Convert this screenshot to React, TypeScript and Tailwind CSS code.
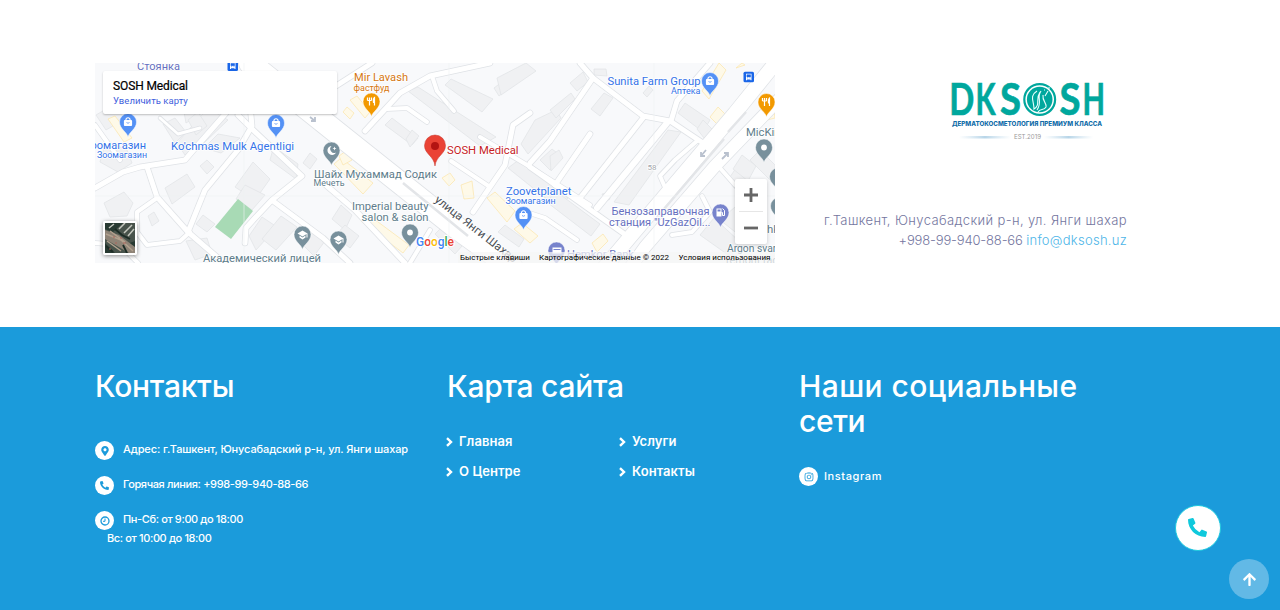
import React from "react";
import { FaPhone, FaInstagram, FaArrowUp, FaPhoneAlt, FaMapMarkerAlt } from "react-icons/fa";

const roads: [string, number][] = [
  ["95,188 123,172 140,167 185,160 197,146 226,113", 5],
  ["246,63 252,126 238,150 205,190 188,232 224,263", 5],
  ["238,115 251,128 302,176 272,200 255,218 246,228 245,243", 5],
  ["273,201 323,238 350,263", 5],
  ["147,167 157,197 188,232", 5],
  ["157,198 137,212 137,232 147,245 180,241 190,232", 4],
  ["95,243 120,245 138,263", 4],
  ["95,125 120,160", 4],
  ["160,118 178,134 200,128", 3],
  ["365,131 400,93 430,76 490,63", 5],
  ["322,95 372,63", 5],
  ["387,109 407,108 427,122", 4],
  ["432,76 437,91 454,111", 4],
  ["530,113 513,125 505,165 473,212", 5],
  ["480,137 527,165 590,205", 4],
  ["451,161 490,187", 4],
  ["580,63 593,78 643,116 670,121 703,143", 5],
  ["593,78 550,141 530,163", 5],
  ["643,118 580,198", 5],
  ["671,121 677,101 710,63", 5],
  ["667,123 597,208", 6],
  ["697,141 675,160 660,176 667,192", 4],
  ["530,167 630,238", 5],
  ["590,134 555,185", 5],
  ["520,210 545,218 577,240", 4],
  ["672,235 692,232 710,212 702,196", 4],
  ["320,180 355,210 405,263", 5],
  ["410,263 430,230", 4],
  ["720,168 735,185", 4],
];

const mainRoads: [string, number][] = [
  ["250,63 320,119 345,139 453,225 512,268", 22],
  ["790,45 735,113 630,237 604,268", 14],
  ["790,88 715,166 645,247 630,268", 12],
];

const buildings = [
  "106,141 100,162 118,172 132,163 127,150", "104,203 124,192 133,203 127,216 110,217",
  "165,188 187,174 195,187 172,204", "200,166 207,160 214,167 207,174",
  "148,216 154,212 159,221 152,226", "204,148 218,134 240,138 221,153",
  "208,108 228,120 205,142 185,155 177,143", "163,124 175,118 186,132 175,143",
  "180,90 202,90 212,107 186,123", "188,120 198,112 207,126 196,135",
  "235,187 253,162 270,179 255,200", "245,185 265,195 252,210 236,199",
  "273,149 280,151 298,164 296,179 270,160", "303,163 310,153 317,159 310,169",
  "249,236 262,217 277,227 256,250", "281,216 297,227 276,250 262,239",
  "298,240 309,226 325,241 314,256", "196,224 203,215 215,224 207,232",
  "186,241 207,238 212,254 195,260", "96,115 113,105 125,119 106,130",
  "385,125 392,118 418,138 412,145", "406,139 412,130 419,136 410,147",
  "408,91 418,87 496,137 480,146", "445,85 451,79 493,99 482,112",
  "494,88 511,75 517,82 499,96", "497,78 526,63 536,71 501,95",
  "521,144 535,120 556,110 561,118 528,154", "540,160 552,149 561,156 550,170",
  "508,168 520,159 568,198 558,208", "554,190 600,224 591,236 548,203",
  "570,83 583,72 588,82 577,91", "550,110 571,93 575,99 556,118",
  "591,109 604,93 613,98 600,116", "643,93 649,86 653,90 647,97",
  "594,69 606,69 607,76 594,75", "550,156 559,150 563,158 551,171",
  "614,202 668,130 681,132 629,205", "678,113 685,103 710,120 703,132",
  "697,129 703,120 713,130 704,138", "602,194 607,193 610,199 605,202",
  "728,180 736,168 749,180 739,194", "733,169 742,155 756,166 748,181",
  "750,160 760,150 775,165 775,185", "700,235 714,218 739,241 731,257",
  "720,220 735,207 739,235", "332,219 341,205 352,215 345,230", "335,236 345,225 359,236 350,248",
  "435,234 441,228 462,246 455,254", "498,232 505,225 524,239 519,247",
];

const yellow = [
  "108,119 115,116 132,138 124,142", "350,100 357,96 370,112 365,118",
  "343,112 347,107 354,113 350,119", "334,164 341,158 373,183 363,194",
  "339,156 346,151 352,160 343,165", "442,178 450,173 455,180 449,186",
  "461,185 472,181 474,198 464,199", "487,198 495,192 515,211 507,222",
  "361,221 370,216 409,245 403,253", "514,229 522,223 538,236 530,243",
  "592,243 603,234 608,241 597,252", "702,91 719,63 726,70 709,99",
  "710,117 718,107 726,115 718,125", "763,121 773,103 775,118", "736,68 742,63 745,65",
];

type LabelProps = { x: number; y: number; w: number; s?: number; c?: string; children: string };

function Label({ x, y, w, s = 11, c = "#607d8b", children }: LabelProps) {
  return (
    <text x={x} y={y} textLength={w} lengthAdjust="spacingAndGlyphs" fontSize={s} fill={c}
      stroke="#fff" strokeWidth={1.6} strokeLinejoin="round" paintOrder="stroke">
      {children}
    </text>
  );
}

function Pin({ x, y, c, kind }: { x: number; y: number; c: string; kind: string }) {
  return (
    <g transform={`translate(${x} ${y})`}>
      <path d="M0 15C-1 10-8.500 7-8.500 0A8.500 8.500 0 1 1 8.500 0C8.500 7 1 10 0 15Z" fill={c} stroke="#fff" strokeWidth=".5" />
      {kind === "bag" && (
        <g fill="none" stroke="#fff" strokeWidth="1.2">
          <path d="M-2 -1V-3Q0-5.500 2-3V-1" />
          <rect x="-3.500" y="-1.500" width="7" height="5" rx=".5" fill="#fff" />
          <path d="M-1.500 .5Q0 2 1.500 .5" stroke={c} strokeWidth=".8" />
        </g>
      )}
      {kind === "food" && (
        <path d="M-4-4V-1M-2-4V4M0-4V-1M-4-1H0M3 4V-4Q1.500-3 2 1H3" fill="none" stroke="#fff" strokeWidth="1.200" />
      )}
      {kind === "dot" && <circle r="2.900" fill="#fff" />}
      {kind === "moon" && <path d="M0-4.500A4.500 4.500 0 1 0 4.500 2A4 4 0 0 1 0-4.500ZM3-4L3.600-2.500L5-2L3.600-1.500L3 0L2.400-1.500L1-2L2.400-2.500Z" fill="#fff" />}
      {kind === "school" && (
        <g fill="#fff"><path d="M-5-1L0-4L5-1L0 2Z" /><path d="M-3 1L0 3L3 1V3L0 5L-3 3ZM4-1H5V3H4Z" /></g>
      )}
      {kind === "fuel" && (
        <g><path d="M-4-4H1V4H-4Z" fill="#fff" /><path d="M-3-3H0V-1H-3Z" fill={c} /><path d="M1 0H2V3H4V-2L2-4" stroke="#fff" fill="none" /></g>
      )}
      {kind === "card" && (
        <g><rect x="-4" y="-3" width="9" height="6" fill="#fff" /><path d="M-3-1H4" stroke={c} /></g>
      )}
    </g>
  );
}

function Bus({ x, y }: { x: number; y: number }) {
  return (
    <g transform={`translate(${x} ${y})`}>
      <rect width="10.500" height="10.500" rx="1.500" fill="#1a66e8" />
      <path d="M2.500 2H8V8.500H7V7.800H3.500V8.500H2.500Z" fill="#fff" />
      <path d="M3.400 3H7.100V5.200H3.400ZM3.500 6.200H4.500M6 6.200H7" fill="#1a66e8" stroke="#1a66e8" strokeWidth=".5" />
    </g>
  );
}

function MapDrawing() {
  const blue = "#3473e8";
  const violet = "#6670c0";
  return (
    <svg className="block h-[200px] w-[680px] font-[Roboto,sans-serif]" viewBox="95 63 680 200">
      <rect x="95" y="63" width="680" height="200" fill="#f8f9fb" />
      <g fill="#f0f1f3" stroke="#e2e4e7" strokeWidth=".8">
        {buildings.map((p) => <polygon key={p} points={p} />)}
      </g>
      <g fill="#fef9e8" stroke="#fbe7b2" strokeWidth=".8">
        {yellow.map((p) => <polygon key={p} points={p} />)}
      </g>
      <g fill="none" stroke="#dfe2e6" strokeLinecap="round" strokeLinejoin="round">
        {[...roads, ...mainRoads].map(([p, w]) => <polyline key={p} points={p} strokeWidth={w + 1.5} />)}
      </g>
      <g fill="none" stroke="#fff" strokeLinecap="round" strokeLinejoin="round">
        {[...roads, ...mainRoads].map(([p, w]) => <polyline key={p} points={p} strokeWidth={w} />)}
      </g>
      <polygon points="215,227 238,199 253,211 231,239" fill="#a8dab5" />
      <g fill="none" stroke="#e3e5e8" strokeWidth="1.200">
        <path d="M403 183L468 236M724 139L658 216M746 112L728 132" strokeWidth="2.500" />
        <path d="M95 196H775M244 63V263M449 63V263M654 63V263" stroke="#eff1f4" strokeWidth=".6" />
      </g>
      <g fill="none" stroke="#b9c1ce" strokeWidth="1.800">
        <path d="M706 150L701 156M701 152V156H705M722 159L728 153M724 153H728V157M310 117L315 121M315 117V121H311" />
      </g>

      <Label x={137} y={70} w={43} c={violet}>Стоянка</Label>
      <Bus x={227.5} y={60.500} />
      <Bus x={743.5} y={71.700} />
      <Pin x={128} y={122} c="#5491f5" kind="bag" />
      <Pin x={276} y={123} c="#5491f5" kind="bag" />
      <Pin x={710} y={81} c="#5491f5" kind="bag" />
      <Pin x={523.500} y={215} c="#5491f5" kind="bag" />
      <Pin x={371.500} y={101.500} c="#f29900" kind="food" />
      <Pin x={766.500} y={102} c="#f29900" kind="food" />
      <Pin x={331.500} y={150.500} c="#78909c" kind="moon" />
      <Pin x={302.500} y={234.500} c="#78909c" kind="school" />
      <Pin x={338.500} y={239.500} c="#78909c" kind="school" />
      <Pin x={410} y={232.500} c="#78909c" kind="dot" />
      <Pin x={764} y={147.500} c="#78909c" kind="dot" />
      <Pin x={778} y={176.500} c="#78909c" kind="dot" />
      <Pin x={779} y={206} c="#78909c" kind="dot" />
      <Pin x={720.500} y={212.500} c="#7783cc" kind="fuel" />
      <Pin x={556.500} y={250.500} c="#7783cc" kind="card" />

      <Label x={84} y={149} w={62} c={blue}>Зоомагазин</Label>
      <Label x={97} y={158} w={50} s={8.5} c={blue}>Зоомагазин</Label>
      <Label x={171} y={150} w={123} c={blue}>Ko'chmas Mulk Agentligi</Label>
      <Label x={354} y={81} w={54} c="#d57712">Mir Lavash</Label>
      <Label x={353.5} y={91} w={36} s={8.5} c="#d57712">фастфуд</Label>
      <Label x={607.5} y={84.5} w={93} c={blue}>Sunita Farm Group</Label>
      <Label x={671} y={93.5} w={29.500} s={8.5} c={blue}>Аптека</Label>
      <Label x={746} y={136} w={52}>MicKinney</Label>
      <Label x={314} y={177.500} w={123}>Шайх Мухаммад Содик</Label>
      <Label x={313.500} y={186} w={31} s={8.5}>Мечеть</Label>
      <Label x={352} y={209.500} w={76.500}>Imperial beauty</Label>
      <Label x={361.500} y={220.500} w={67}>salon & salon</Label>
      <Label x={506} y={194.500} w={65.500} c={blue}>Zoovetplanet</Label>
      <Label x={505.500} y={203.500} w={50} s={8.5} c={blue}>Зоомагазин</Label>
      <Label x={611.500} y={214.500} w={98} c={violet}>Бензозаправочная</Label>
      <Label x={609} y={225.500} w={101.500} c={violet}>станция "UzGazOil...</Label>
      <Label x={203} y={262} w={118}>Академический лицей</Label>
      <Label x={567} y={258} w={67} c={violet}>Hemkor Bank</Label>
      <Label x={727} y={252} w={60}>Argon svarka</Label>
      <Label x={726} y={264} w={55}>remont radi</Label>
      <Label x={767} y={233} w={12}>hk</Label>
      <Label x={647.500} y={170} w={9} s={8} c="#a3a6ab">58</Label>
      <g transform="translate(434 201) rotate(38)">
        <Label x={0} y={0} w={101} s={11.5} c="#4b5057">улица Янги Шахар</Label>
      </g>

      <path d="M435 166C434 156 424.500 154 424.500 145.500A10.500 10.500 0 1 1 445.500 145.500C445.500 154 436 156 435 166Z" fill="#ea4335" stroke="#c5352a" strokeWidth=".5" />
      <circle cx="435" cy="146" r="4" fill="#b31412" />
      <Label x={447} y={153.500} w={71.500} c="#c5221f">SOSH Medical</Label>

      <rect x="458" y="252" width="317" height="11" fill="#f5f5f5" opacity=".75" />
      <g fontSize="8" fill="#000">
        <text x="460" y="260" textLength="70" lengthAdjust="spacingAndGlyphs">Быстрые клавиши</text>
        <text x="539" y="260" textLength="130" lengthAdjust="spacingAndGlyphs">Картографические данные © 2022</text>
        <text x="678.500" y="260" textLength="92" lengthAdjust="spacingAndGlyphs">Условия использования</text>
      </g>
      <text x="416" y="246" textLength="38" lengthAdjust="spacingAndGlyphs" fontSize="12" fontWeight="500" stroke="#fff" strokeWidth="2" paintOrder="stroke">
        <tspan fill="#4285f4">G</tspan><tspan fill="#ea4335">o</tspan><tspan fill="#fbbc05">o</tspan><tspan fill="#4285f4">g</tspan><tspan fill="#34a853">l</tspan><tspan fill="#ea4335">e</tspan>
      </text>
    </svg>
  );
}

function MapCard() {
  return (
    <div className="relative h-[200px] w-[680px] overflow-hidden font-[Roboto,sans-serif]">
      <MapDrawing />
      <div className="absolute left-2 top-2 h-[43px] w-[234px] rounded-xs bg-white pl-[10px] pt-[8px] shadow-[0_1px_2px_rgba(0,0,0,.24)]">
        <div className="text-[12px] leading-[15px] tracking-[-0.12px] text-black [-webkit-text-stroke:0.2px_#000]">SOSH Medical</div>
        <div className="text-[9.5px] leading-[14px] tracking-[0.03px] text-[#3f5fdd]">Увеличить карту</div>
      </div>
      <div className="absolute bottom-[8px] left-[8px] h-[34px] w-[34px] rounded-xs border-2 border-white shadow-[0_1px_4px_rgba(0,0,0,.45)]">
        <svg viewBox="0 0 30 30" className="size-full">
          <path fill="#48534b" d="M0 0H30V30H0Z" />
          <path fill="#283a32" d="M0 0H18L8 9L0 6ZM0 20L10 30H0ZM22 21L30 18V30H27Z" />
          <path fill="#8e8376" d="M0 7L14 12L30 24V30H24L0 16Z" />
          <path d="M1 11L16 17L28 28M5 8L20 19M2 18L16 28" fill="none" stroke="#b2a18e" strokeWidth="1.500" />
          <path d="M14 6L20 0M19 10L27 2M23 13L29 6M4 5L9 1" fill="none" stroke="#c5c8bf" strokeWidth="1.500" />
          <path d="M10 6L17 12L25 16M1 23L8 29M18 22L22 30" fill="none" stroke="#1c2c25" strokeWidth="1.800" />
          <path d="M8 14H10M15 15H17M18 20H21M10 20H12M4 26H6" stroke="#aa655b" />
        </svg>
      </div>
      <div className="absolute right-2 top-[116px] flex h-[65px] w-8 flex-col items-center rounded-xs bg-white shadow-[0_1px_4px_rgba(0,0,0,.2)]">
        <div className="flex h-8 w-full items-center justify-center">
          <svg className="size-[14px]" viewBox="0 0 14 14"><path d="M7 0V14M0 7H14" stroke="#666" strokeWidth="2.800" /></svg>
        </div>
        <div className="h-px w-6 bg-[#e6e6e6]" />
        <div className="flex h-8 w-full items-center justify-center">
          <svg className="size-[14px]" viewBox="0 0 14 14"><path d="M0 7H14" stroke="#666" strokeWidth="2.800" /></svg>
        </div>
      </div>
    </div>
  );
}

function Logo() {
  return (
    <svg className="block h-[64px] w-[156px]" viewBox="949 79 156 64">
      <defs>
        <linearGradient id="rule"><stop stopColor="#c7deed" stopOpacity="0" /><stop offset=".5" stopColor="#b7d5e8" /><stop offset="1" stopColor="#c7deed" stopOpacity="0" /></linearGradient>
      </defs>
      <g fill="#00a79d" stroke="#00a79d" strokeWidth=".7" fontFamily="Lato, sans-serif" fontWeight="700" fontSize="44">
        <text x="949.300" y="115.300" textLength="25" lengthAdjust="spacingAndGlyphs">D</text>
        <text x="975.500" y="115.300" textLength="20" lengthAdjust="spacingAndGlyphs">K</text>
        <text x="1000" y="115.300" textLength="21" lengthAdjust="spacingAndGlyphs">S</text>
        <text x="1059.500" y="115.300" textLength="21" lengthAdjust="spacingAndGlyphs">S</text>
        <text x="1082.500" y="115.300" textLength="22.500" lengthAdjust="spacingAndGlyphs">H</text>
      </g>
      <circle cx="1039.700" cy="99.500" r="15.400" fill="#fff" stroke="#00a79d" strokeWidth="2.200" />
      <circle cx="1039.700" cy="99.500" r="12.800" fill="#00a79d" />
      <path d="M1037 91C1029 96 1034 101 1034 109C1041 105 1035 99 1040 92M1041 91C1036 98 1043 101 1037 110M1043 95C1042 101 1047 103 1046 107C1044 111 1040 108 1038 112M1048 91L1045 96M1044 90H1045M1048 88H1050M1051 93H1052" fill="none" stroke="#e8ffff" strokeWidth="1.100" />
      <text x="952" y="125.700" textLength="150" lengthAdjust="spacingAndGlyphs" fontFamily="Inter, sans-serif" fontWeight="800" fontSize="6.300" fill="#126da9">ДЕРМАТОКОСМЕТОЛОГИЯ ПРЕМИУМ КЛАССА</text>
      <rect x="959" y="136" width="52" height="2.500" fill="url(#rule)" />
      <rect x="1044" y="136" width="49" height="2.500" fill="url(#rule)" />
      <text x="1014" y="139" textLength="27" lengthAdjust="spacingAndGlyphs" fontFamily="Inter, sans-serif" fontSize="6.500" fill="#999">EST.2019</text>
    </svg>
  );
}

function Disc({ children }: { children: React.ReactNode }) {
  return <span className="mt-px flex size-[19px] shrink-0 items-center justify-center rounded-full bg-white text-[#1b9bdb]">{children}</span>;
}

function NavLink({ children }: { children: string }) {
  return (
    <a className="flex h-[30px] w-[173px] items-center text-[13px] font-semibold tracking-[0.06px]">
      <svg className="-ml-[2px] mr-[5px] h-[10px] w-[9px]" viewBox="0 0 9 10"><path d="M2 1.200L6 5L2 8.800" fill="none" stroke="currentColor" strokeWidth="2.400" /></svg>
      {children}
    </a>
  );
}

export default function App() {
  return (
    <div className="flex h-[610px] w-[1280px] flex-col overflow-hidden bg-white font-[Inter,sans-serif]">
      <section className="flex h-[327px] pl-[95px] pt-[63px]">
        <MapCard />
        <div className="flex w-[352px] flex-col items-end">
          <div className="mr-[22px] mt-4"><Logo /></div>
          <div className="mt-[67px] whitespace-nowrap text-right text-[13px] font-light leading-5 text-[#7476a0]">
            <div className="tracking-[0.38px]">г.Ташкент, Юнусабадский р-н, ул. Янги шахар</div>
            <div className="tracking-[-0.16px]">+998-99-940-88-66 <a className="tracking-[0.27px] text-[#4db5e8]">info@dksosh.uz</a></div>
          </div>
        </div>
      </section>

      <footer className="relative flex h-[283px] bg-[#1b9bdb] pl-[95px] pt-[42px] text-white">
        <div className="w-[352px]">
          <h2 className="text-[30px] font-medium leading-[35px] tracking-[-0.25px]">Контакты</h2>
          <div className="mt-9 flex flex-col gap-[15px] text-[11px] font-medium leading-[19px]">
            <div className="flex gap-[9px]"><Disc><FaMapMarkerAlt className="size-[10px]" /></Disc><span className="tracking-[-0.11px]">Адрес: г.Ташкент, Юнусабадский р-н, ул. Янги шахар</span></div>
            <div className="flex gap-[9px]"><Disc><FaPhone className="size-[9px] -scale-x-100" /></Disc><span className="tracking-[-0.37px]">Горячая линия: +998-99-940-88-66</span></div>
            <div>
              <div className="flex h-[19px] gap-[9px]">
                <Disc><svg className="size-[10px]" viewBox="0 0 10 10"><path d="M5 2.500V5.300H3" fill="none" stroke="currentColor" /><circle cx="5" cy="5" r="4" fill="none" stroke="currentColor" strokeWidth="1.300" /></svg></Disc>
                <span className="tracking-[-0.38px]">Пн-Сб: от 9:00 до 18:00</span>
              </div>
              <div className="pl-3 tracking-[-0.38px]">Вс: от 10:00 до 18:00</div>
            </div>
          </div>
        </div>
        <div className="w-[352px]">
          <h2 className="text-[30px] font-medium leading-[35px] tracking-[-0.25px]">Карта сайта</h2>
          <nav className="mt-[23px] flex flex-wrap">
            <NavLink>Главная</NavLink><NavLink>Услуги</NavLink>
            <NavLink>О Центре</NavLink><NavLink>Контакты</NavLink>
          </nav>
        </div>
        <div className="w-[352px]">
          <h2 className="text-[30px] font-medium leading-[35px] tracking-[0.4px]">Наши социальные<br /><span className="tracking-[-0.4px]">сети</span></h2>
          <div className="mt-[27px] flex gap-[6px] text-[11px] font-medium leading-[21px]"><Disc><FaInstagram className="size-[10px]" /></Disc><span className="tracking-[0.6px]">Instagram</span></div>
        </div>
        <div className="absolute left-[1175px] top-[178px] flex size-[46px] items-center justify-center rounded-full border border-[#1cc9df] bg-white text-[#10c9dc]">
          <FaPhoneAlt className="mb-px mr-px size-[19px] -scale-x-100 rotate-90" />
        </div>
        <div className="absolute left-[1229px] top-[232px] flex size-10 items-center justify-center rounded-full bg-[#62b9e6]">
          <FaArrowUp className="size-[15px]" />
        </div>
      </footer>
    </div>
  );
}
